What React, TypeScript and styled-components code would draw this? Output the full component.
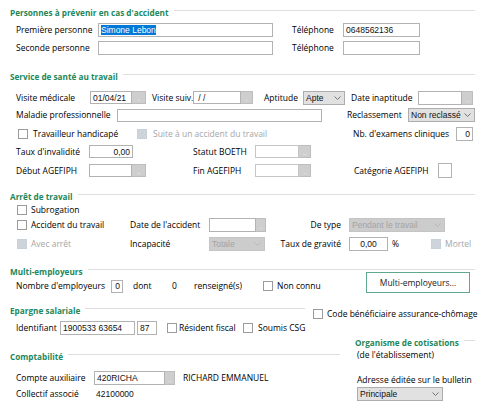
import React from "react";
import styled, { createGlobalStyle } from "styled-components";

const GlobalStyle = createGlobalStyle`
  body {
    margin: 0;
    background: #fff;
    font-family: "Open Sans", "Noto Sans", sans-serif;
    font-size: 8.5px;
    color: #000;
  }
`;

const Page = styled.div`
  width: 487px;
  height: 402px;
  box-sizing: border-box;
  padding: 5px 12px 0 10px;
  display: flex;
  flex-direction: column;
  overflow: hidden;
`;

const Legend = styled.div<{ $mt?: number; $w?: number }>`
  display: flex;
  align-items: center;
  flex: none;
  height: 14px;
  margin-top: ${(p) => p.$mt ?? 0}px;
  width: ${(p) => (p.$w ? `${p.$w}px` : "auto")};
  color: #23875a;
  font-size: 8.2px;
  font-weight: 700;
  white-space: nowrap;
  &::after {
    content: "";
    flex: 1;
    height: 1px;
    margin: -3px 0 0 5px;
    background: #dedede;
  }
`;

const Row = styled.div<{ $mt?: number; $h?: number; $align?: string; $pl?: number }>`
  display: flex;
  align-items: ${(p) => p.$align ?? "center"};
  flex: none;
  height: ${(p) => p.$h ?? 14}px;
  margin-top: ${(p) => p.$mt ?? 0}px;
  padding-left: ${(p) => p.$pl ?? 6}px;
`;

const Group = styled.div<{ $mt?: number }>`
  display: flex;
  align-items: center;
  height: 14px;
  margin-top: ${(p) => p.$mt ?? 0}px;
`;

const Label = styled.span<{ $w?: number; $ml?: number; $dim?: boolean; $right?: boolean }>`
  flex: none;
  width: ${(p) => (p.$w ? `${p.$w}px` : "auto")};
  margin-left: ${(p) => p.$ml ?? 0}px;
  color: ${(p) => (p.$dim ? "#a6a6a6" : "inherit")};
  text-align: ${(p) => (p.$right ? "right" : "left")};
  white-space: nowrap;
  line-height: 12px;
`;

const Input = styled.div<{ $w: number; $h?: number; $ml?: number; $align?: string; $disabled?: boolean }>`
  flex: none;
  box-sizing: border-box;
  display: flex;
  align-items: center;
  justify-content: ${(p) => p.$align ?? "flex-start"};
  width: ${(p) => p.$w}px;
  height: ${(p) => p.$h ?? 13}px;
  margin-left: ${(p) => p.$ml ?? 0}px;
  padding: 0 2px;
  border: 1px solid ${(p) => (p.$disabled ? "#c6c6c6" : "#b2b2b2")};
  background: #fff;
  font-family: "Liberation Sans", Arial, sans-serif;
  font-size: 8.5px;
  color: #111;
  white-space: nowrap;
`;

const Value = styled.span`
  flex: none;
  font-family: "Liberation Sans", Arial, sans-serif;
  font-size: 8.5px;
  color: #111;
  white-space: nowrap;
`;

const Selected = styled.span`
  background: #0078d7;
  color: #fff;
`;

const Picker = styled.span<{ $w?: number; $h?: number }>`
  flex: none;
  box-sizing: border-box;
  display: flex;
  align-items: flex-end;
  justify-content: center;
  width: ${(p) => p.$w ?? 12}px;
  height: ${(p) => p.$h ?? 13}px;
  border: 1px solid #bdbdbd;
  border-left: none;
  background: #cecece;
  color: #f2f2f2;
  font-size: 6px;
  line-height: 7px;
  letter-spacing: -0.5px;
`;

const Select = styled.div<{ $w: number; $h?: number; $ml?: number; $mt?: number; $disabled?: boolean }>`
  flex: none;
  box-sizing: border-box;
  display: flex;
  align-items: center;
  justify-content: space-between;
  width: ${(p) => p.$w}px;
  height: ${(p) => p.$h ?? 14}px;
  margin-left: ${(p) => p.$ml ?? 0}px;
  margin-top: ${(p) => p.$mt ?? 0}px;
  padding: 0 3px 0 2px;
  border: 1px solid ${(p) => (p.$disabled ? "#c4c4c4" : "#adadad")};
  background: ${(p) => (p.$disabled ? "#cccccc" : "#e1e1e1")};
  color: ${(p) => (p.$disabled ? "#a4a4a4" : "#111")};
  font-family: "Liberation Sans", Arial, sans-serif;
  font-size: 8.5px;
  white-space: nowrap;
  svg {
    flex: none;
  }
`;

const Check = styled.span<{ $ml?: number; $disabled?: boolean }>`
  flex: none;
  box-sizing: border-box;
  width: 10px;
  height: 10px;
  margin-left: ${(p) => p.$ml ?? 0}px;
  border: 1px solid ${(p) => (p.$disabled ? "#c9d1d8" : "#9b9b9b")};
  background: ${(p) => (p.$disabled ? "#cdd5db" : "#fff")};
`;

const Button = styled.div<{ $w: number; $ml?: number }>`
  flex: none;
  box-sizing: border-box;
  display: flex;
  align-items: center;
  justify-content: center;
  width: ${(p) => p.$w}px;
  height: 21px;
  margin-left: ${(p) => p.$ml ?? 0}px;
  border: 1px solid #5fa88c;
  background: #fff;
  color: #1b1b1b;
`;

const Columns = styled.div`
  display: flex;
  flex: none;
`;

const Column = styled.div<{ $w: number; $ml?: number }>`
  display: flex;
  flex-direction: column;
  width: ${(p) => p.$w}px;
  margin-left: ${(p) => p.$ml ?? 0}px;
`;

const Note = styled.div<{ $mt?: number }>`
  height: 12px;
  line-height: 12px;
  margin-top: ${(p) => p.$mt ?? 0}px;
  padding-left: 2px;
  white-space: nowrap;
`;

const Chevron = ({ color = "#6a6a6a" }: { color?: string }) => (
  <svg width="7" height="4" viewBox="0 0 7 4">
    <path d="M0.5 0.5 L3.5 3.5 L6.5 0.5" fill="none" stroke={color} strokeWidth="0.9" />
  </svg>
);

const Dots = () => <>...</>;

export default function App() {
  return (
    <Page>
      <GlobalStyle />

      <Legend>Personnes à prévenir en cas d'accident</Legend>
      <Row $mt={4}>
        <Label $w={82}>Première personne</Label>
        <Input $w={175} $h={14}>
          <Selected>Simone Lebon</Selected>
        </Input>
        <Label $ml={19} $w={51}>Téléphone</Label>
        <Input $w={77} $h={14}>0648562136</Input>
      </Row>
      <Row $mt={4}>
        <Label $w={82}>Seconde personne</Label>
        <Input $w={175} $h={14} />
        <Label $ml={19} $w={51}>Téléphone</Label>
        <Input $w={77} $h={14} />
      </Row>

      <Legend $mt={14}>Service de santé au travail</Legend>
      <Row $mt={8} $h={13}>
        <Label $w={74}>Visite médicale</Label>
        <Input $w={42}>01/04/21</Input>
        <Picker $w={14}><Dots /></Picker>
        <Label $ml={6} $w={41}>Visite suiv.</Label>
        <Input $w={48}>&nbsp;/ /</Input>
        <Picker><Dots /></Picker>
        <Label $ml={11} $w={39}>Aptitude</Label>
        <Select $w={42} $h={14}>
          Apte
          <Chevron />
        </Select>
        <Label $ml={6} $w={67}>Date inaptitude</Label>
        <Input $w={44} $h={14} />
        <Picker $w={11} $h={14}><Dots /></Picker>
      </Row>
      <Row $mt={4}>
        <Label $w={101}>Maladie professionnelle</Label>
        <Input $w={205} />
        <Label $ml={25} $w={61}>Reclassement</Label>
        <Select $w={67}>
          Non reclassé
          <Chevron />
        </Select>
      </Row>
      <Row $mt={5} $h={14}>
        <Check $ml={2} />
        <Label $ml={5} $w={104}>Travailleur handicapé</Label>
        <Check $disabled />
        <Label $ml={6} $w={200} $dim>Suite à un accident du travail</Label>
        <Label $w={103}>Nb. d'examens cliniques</Label>
        <Input $w={17} $h={14} $align="flex-end">0</Input>
      </Row>
      <Row $mt={4} $h={13}>
        <Label $w={73}>Taux d'invalidité</Label>
        <Input $w={44} $align="flex-end">0,00</Input>
        <Label $ml={60} $w={62}>Statut BOETH</Label>
        <Input $w={44} $disabled />
        <Picker><Dots /></Picker>
      </Row>
      <Row $mt={5} $h={15}>
        <Label $w={73}>Début AGEFIPH</Label>
        <Input $w={43} />
        <Picker $w={14}><Dots /></Picker>
        <Label $ml={47} $w={62}>Fin AGEFIPH</Label>
        <Input $w={44} $disabled />
        <Picker><Dots /></Picker>
        <Label $ml={43} $w={84}>Catégorie AGEFIPH</Label>
        <Input $w={14} $h={15} />
      </Row>

      <Legend $mt={11}>Arrêt de travail</Legend>
      <Row $mt={1} $h={12}>
        <Check $ml={1} />
        <Label $ml={4}>Subrogation</Label>
      </Row>
      <Row $mt={2}>
        <Check $ml={1} />
        <Label $ml={4} $w={99}>Accident du travail</Label>
        <Label $w={79}>Date de l'accident</Label>
        <Input $w={47} $h={14} />
        <Picker $w={10} $h={14}><Dots /></Picker>
        <Label $w={75} $right>De type</Label>
        <Select $ml={8} $w={96} $disabled>
          Pendant le travail
          <Chevron color="#b4b4b4" />
        </Select>
      </Row>
      <Row $mt={5}>
        <Check $ml={1} $disabled />
        <Label $ml={4} $w={99} $dim>Avec arrêt</Label>
        <Label $w={79}>Incapacité</Label>
        <Select $w={56} $disabled>
          Totale
          <Chevron color="#b4b4b4" />
        </Select>
        <Label $w={76} $right>Taux de gravité</Label>
        <Input $ml={8} $w={39} $h={14} $align="center">0,00</Input>
        <Label $ml={4} $w={39}>%</Label>
        <Check $disabled />
        <Label $ml={4} $dim>Mortel</Label>
      </Row>

      <Legend $mt={13}>Multi-employeurs</Legend>
      <Row $mt={-6} $h={21} $align="flex-end">
        <Group>
          <Label $w={95}>Nombre d'employeurs</Label>
          <Input $w={12} $align="flex-end">0</Input>
          <Label $ml={10} $w={39}>dont</Label>
          <Label $w={22}>0</Label>
          <Label $w={69}>renseigné(s)</Label>
          <Check />
          <Label $ml={4} $w={89}>Non connu</Label>
        </Group>
        <Button $w={104}>Multi-employeurs...</Button>
      </Row>

      <Row $mt={10} $h={14} $pl={0}>
        <Legend $w={295}>Epargne salariale</Legend>
        <Group $mt={8}>
          <Check $ml={8} />
          <Label $ml={4}>Code bénéficiaire assurance-chômage</Label>
        </Group>
      </Row>
      <Row $mt={4}>
        <Label $w={44}>Identifiant</Label>
        <Input $w={75} $h={14}>1900533 63654</Input>
        <Input $ml={2} $w={20} $h={14}>87</Input>
        <Check $ml={10} />
        <Label $ml={2} $w={64}>Résident fiscal</Label>
        <Check />
        <Label $ml={5}>Soumis CSG</Label>
      </Row>

      <Columns>
        <Column $w={330}>
          <Legend $mt={14}>Comptabilité</Legend>
          <Row $mt={8}>
            <Label $w={78}>Compte auxiliaire</Label>
            <Input $w={71} $h={14}>420RICHA</Input>
            <Picker $w={10} $h={14}><Dots /></Picker>
            <Label $ml={8}>RICHARD EMMANUEL</Label>
          </Row>
          <Row $mt={3} $h={12}>
            <Label $w={80}>Collectif associé</Label>
            <Value>42100000</Value>
          </Row>
        </Column>
        <Column $w={120} $ml={15}>
          <Legend>Organisme de cotisations</Legend>
          <Note>(de l'établissement)</Note>
          <Note $mt={13}>Adresse éditée sur le bulletin</Note>
          <Select $ml={2} $mt={1} $w={86}>
            Principale
            <Chevron />
          </Select>
        </Column>
      </Columns>
    </Page>
  );
}
